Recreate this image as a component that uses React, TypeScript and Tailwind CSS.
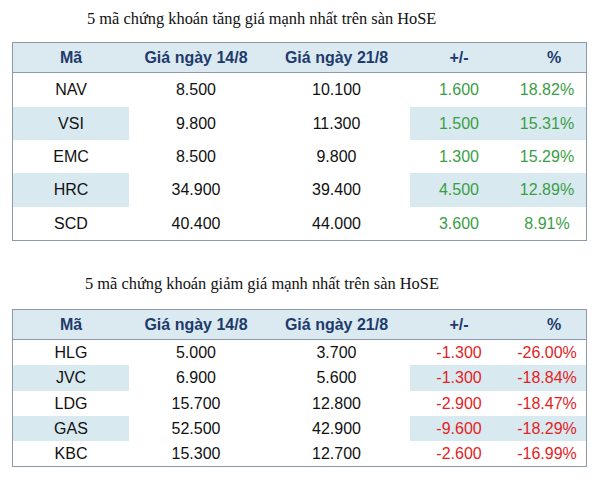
const gainers = [
  { code: "NAV", d14: "8.500", d21: "10.100", diff: "1.600", pct: "18.82%" },
  { code: "VSI", d14: "9.800", d21: "11.300", diff: "1.500", pct: "15.31%" },
  { code: "EMC", d14: "8.500", d21: "9.800", diff: "1.300", pct: "15.29%" },
  { code: "HRC", d14: "34.900", d21: "39.400", diff: "4.500", pct: "12.89%" },
  { code: "SCD", d14: "40.400", d21: "44.000", diff: "3.600", pct: "8.91%" },
];

const losers = [
  { code: "HLG", d14: "5.000", d21: "3.700", diff: "-1.300", pct: "-26.00%" },
  { code: "JVC", d14: "6.900", d21: "5.600", diff: "-1.300", pct: "-18.84%" },
  { code: "LDG", d14: "15.700", d21: "12.800", diff: "-2.900", pct: "-18.47%" },
  { code: "GAS", d14: "52.500", d21: "42.900", diff: "-9.600", pct: "-18.29%" },
  { code: "KBC", d14: "15.300", d21: "12.700", diff: "-2.600", pct: "-16.99%" },
];

type Row = (typeof gainers)[number];

const cols = "grid grid-cols-[116px_134px_147px_98px_78px]";

function StockTable({
  rows,
  rowH,
  up,
}: {
  rows: Row[];
  rowH: string[];
  up: boolean;
}) {
  const tone = up ? "text-[#3a9e45]" : "text-[#e4231f]";
  return (
    <div className="ml-[12px] w-[575px] border border-[#8d99ab] font-['Liberation_Sans',Arial,sans-serif] text-[16px]">
      <div
        className={`${cols} h-[30px] items-center border-b border-[#8d99ab] bg-[#dbe9f1] font-bold text-[#1d3b6c] text-center`}
      >
        <span>Mã</span>
        <span>Giá ngày 14/8</span>
        <span>Giá ngày 21/8</span>
        <span>+/-</span>
        <span className="pl-[14px]">%</span>
      </div>
      {rows.map((r, i) => {
        const hl = i % 2 === 1 ? "bg-[#d9e9f0]" : "";
        return (
          <div key={r.code} className={`${cols} text-center ${rowH[i]}`}>
            <span className={`flex items-center justify-center text-[#111] ${hl}`}>{r.code}</span>
            <span className="flex items-center justify-center text-[#111]">{r.d14}</span>
            <span className="flex items-center justify-center text-[#111]">{r.d21}</span>
            <span className={`flex items-center justify-center ${tone} ${hl}`}>{r.diff}</span>
            <span className={`flex items-center justify-center ${tone} ${hl}`}>{r.pct}</span>
          </div>
        );
      })}
    </div>
  );
}

export default function App() {
  return (
    <div className="w-[600px] h-[487px] bg-white overflow-hidden pt-[9px]">
      <p className="pl-[87px] text-[16.4px] leading-[19px] text-[#111] font-['Liberation_Serif','Times_New_Roman',serif]">
        5 mã chứng khoán tăng giá mạnh nhất trên sàn HoSE
      </p>
      <div className="mt-[14px]">
        <StockTable
          rows={gainers}
          up
          rowH={["h-[34px]", "h-[33px]", "h-[33px]", "h-[34px]", "h-[33px]"]}
        />
      </div>
      <p className="mt-[33px] pl-[85px] text-[16.4px] leading-[19px] text-[#111] font-['Liberation_Serif','Times_New_Roman',serif]">
        5 mã chứng khoán giảm giá mạnh nhất trên sàn HoSE
      </p>
      <div className="mt-[16px]">
        <StockTable
          rows={losers}
          up={false}
          rowH={["h-[25px]", "h-[26px]", "h-[25px]", "h-[25px]", "h-[25px]"]}
        />
      </div>
    </div>
  );
}
